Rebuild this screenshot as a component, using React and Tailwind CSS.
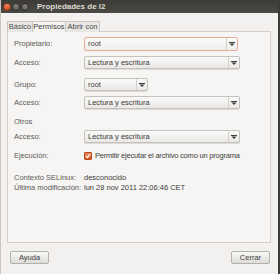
import React from "react";

function Combo({ text, width, entry = false, height = 13 }) {
  return (
    <div
      className={`flex rounded-[2px] border ${
        entry
          ? "border-[#eba899] bg-gradient-to-b from-[#fbfbfa] to-[#efeeed]"
          : "border-[#c5c2bd] bg-gradient-to-b from-[#fafafa] to-[#e9e8e6] shadow-[0_1px_0_#dcdad6]"
      }`}
      style={{ width, height }}
    >
      <div className="flex-1 flex items-center pl-[3px] text-[#3c3c3c] leading-none">{text}</div>
      <div className="w-[11px] flex items-center justify-center border-l border-l-[#d3d0cc]">
        <svg width="6" height="4" viewBox="0 0 6 4">
          <rect x="0" y="0" width="6" height="1" fill="#3c3c3c" />
          <path d="M0.5 1.5 H5.5 L3 4 Z" fill="#3c3c3c" />
        </svg>
      </div>
    </div>
  );
}

function Label({ children }) {
  return <div className="w-[70px] shrink-0 text-[#5a5955]">{children}</div>;
}

export default function App() {
  return (
    <div
      className="w-[280px] h-[274px] flex flex-col bg-[#f2f1f0] border-l border-l-[#c9c6c1] border-r-2 border-r-[#3c3b37] text-[7.5px] leading-none text-[#3c3c3c] overflow-hidden"
      style={{ fontFamily: '"Liberation Sans", Arial, sans-serif' }}
    >
      <div className="h-[13px] shrink-0 flex items-center bg-gradient-to-b from-[#3c3b37] to-[#4a4944] -ml-px">
        <div className="flex items-center gap-[1px] pl-[3px]">
          <div className="w-[8px] h-[8px] rounded-full bg-gradient-to-b from-[#f58a5b] to-[#de4815] border border-[#7a3a1c]" />
          <div className="w-[8px] h-[8px] rounded-full bg-gradient-to-b from-[#8a8780] to-[#5e5d58] border border-[#2e2d2a]" />
          <div className="w-[8px] h-[8px] rounded-full bg-gradient-to-b from-[#8a8780] to-[#5e5d58] border border-[#2e2d2a]" />
        </div>
        <div className="ml-[8px] font-bold text-[#dfdbd2] text-[8px]">Propiedades de l2</div>
      </div>

      <div className="flex-1 flex flex-col pl-[6px] pr-[7px]">
        <div className="mt-[8px] h-[11px] flex relative z-10 -mb-px">
          <div className="w-[26px] flex items-center justify-center border border-[#c9c6c1] border-b-0 bg-[#e9e7e4] text-[#4c4c4c]">
            Básico
          </div>
          <div className="w-[33px] flex items-center justify-center border border-[#c9c6c1] border-b-0 border-l-0 bg-[#f6f5f4] text-[#3c3c3c]">
            Permisos
          </div>
          <div className="w-[34px] flex items-center justify-center border border-[#c9c6c1] border-b-0 border-l-0 bg-[#e9e7e4] text-[#4c4c4c]">
            Abrir con
          </div>
        </div>

        <div className="h-[212px] border border-[#d3d0cc] bg-[#f6f5f4] pl-[6px] pt-[5px] flex flex-col">
          <div className="flex items-center h-[14px]">
            <Label>Propietario:</Label>
            <Combo text="root" width={154} height={14} entry />
          </div>
          <div className="flex items-center h-[13px] mt-[5px]">
            <Label>Acceso:</Label>
            <Combo text="Lectura y escritura" width={156} />
          </div>
          <div className="flex items-center h-[13px] mt-[9px]">
            <Label>Grupo:</Label>
            <Combo text="root" width={64} />
          </div>
          <div className="flex items-center h-[13px] mt-[5px]">
            <Label>Acceso:</Label>
            <Combo text="Lectura y escritura" width={156} />
          </div>
          <div className="flex items-center h-[12px] mt-[7px] text-[#5a5955]">Otros</div>
          <div className="flex items-center h-[13px] mt-[2px]">
            <Label>Acceso:</Label>
            <Combo text="Lectura y escritura" width={156} />
          </div>
          <div className="flex items-center h-[12px] mt-[7px]">
            <Label>Ejecución:</Label>
            <div className="w-[8px] h-[8px] rounded-[1px] bg-gradient-to-b from-[#f08a5c] to-[#d9541e] border border-[#b64a1c] flex items-center justify-center">
              <svg width="6" height="6" viewBox="0 0 6 6">
                <path d="M0.8 3 L2.4 4.6 L5.2 1.2" stroke="#fff" strokeWidth="1.2" fill="none" />
              </svg>
            </div>
            <div className="ml-[3px] text-[#3c3c3c] tracking-[-0.2px]">Permitir ejecutar el archivo como un programa</div>
          </div>
          <div className="flex items-center h-[10px] mt-[11px]">
            <Label>Contexto SELinux:</Label>
            <div>desconocido</div>
          </div>
          <div className="flex items-center h-[10px]">
            <Label>Última modificación:</Label>
            <div>lun 28 nov 2011 22:06:46 CET</div>
          </div>
        </div>

        <div className="flex justify-between mt-[8px] pl-[3px] pr-[1px]">
          <button className="w-[39px] h-[13px] rounded-[2px] border border-[#b3b0ab] bg-gradient-to-b from-[#f8f8f7] to-[#dddcd9] text-[#3c3c3c] leading-none">
            Ayuda
          </button>
          <button className="w-[39px] h-[13px] rounded-[2px] border border-[#b3b0ab] bg-gradient-to-b from-[#f8f8f7] to-[#dddcd9] text-[#3c3c3c] leading-none">
            Cerrar
          </button>
        </div>
      </div>
    </div>
  );
}
